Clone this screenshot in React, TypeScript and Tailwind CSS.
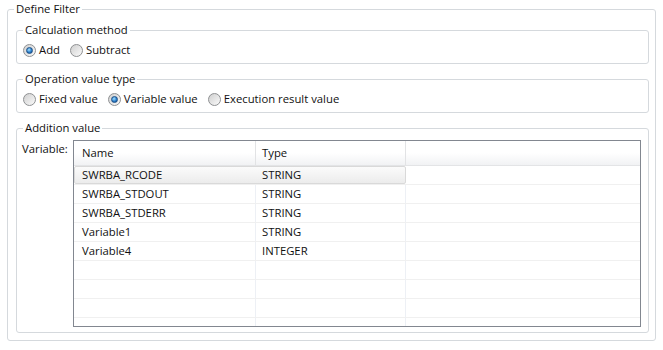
const font = { fontFamily: '"Open Sans", "Noto Sans", sans-serif' };

type Row = { name: string; type: string };

const rows: Row[] = [
  { name: 'SWRBA_RCODE', type: 'STRING' },
  { name: 'SWRBA_STDOUT', type: 'STRING' },
  { name: 'SWRBA_STDERR', type: 'STRING' },
  { name: 'Variable1', type: 'STRING' },
  { name: 'Variable4', type: 'INTEGER' },
  { name: '', type: '' },
  { name: '', type: '' },
  { name: '', type: '' },
  { name: '', type: '' },
];

function Radio({ label, checked }: { label: string; checked?: boolean }) {
  return (
    <label className="flex items-center gap-[3px] h-[16px]">
      <span className="w-[13px] h-[13px] rounded-full border border-[#8e9092] bg-gradient-to-br from-[#d0d0d0] to-[#fafafa] flex items-center justify-center">
        {checked && (
          <span className="w-[7px] h-[7px] rounded-full border border-[#1c4f86] bg-[radial-gradient(circle_at_40%_35%,#a6e2ff,#2b7fcc_55%,#0e4786)]" />
        )}
      </span>
      <span>{label}</span>
    </label>
  );
}

function Group({ title, children, className = '' }: { title: string; children: React.ReactNode; className?: string }) {
  return (
    <fieldset className={`border border-[#d5d9dd] rounded-[3px] ${className}`}>
      <legend className="ml-[6px] px-[2px] leading-[16px]">{title}</legend>
      {children}
    </fieldset>
  );
}

export default function App() {
  return (
    <div className="w-[663px] h-[350px] bg-white text-[11.3px] text-[#111] pt-[1px] pl-[7px]" style={font}>
      <Group title="Define Filter" className="w-[649px]">
        <div className="pt-[5px] pl-[8px] pr-[6px] pb-[7px]">
          <Group title="Calculation method">
            <div className="flex gap-[10px] pl-[6px] pt-[4px] pb-[5px]">
              <Radio label="Add" checked />
              <Radio label="Subtract" />
            </div>
          </Group>

          <Group title="Operation value type" className="mt-[7px]">
            <div className="flex gap-[10px] pl-[6px] pt-[4px] pb-[5px]">
              <Radio label="Fixed value" />
              <Radio label="Variable value" checked />
              <Radio label="Execution result value" />
            </div>
          </Group>

          <Group title="Addition value" className="mt-[7px]">
            <div className="flex pl-[5px] pr-[7px] pt-[4px] pb-[5px]">
              <div className="w-[51px] shrink-0 mt-[1px] leading-[16px]">Variable:</div>
              <div className="flex-1 h-[187px] overflow-hidden border border-[#828790] bg-white">
                <div className="flex h-[25px] bg-gradient-to-b from-white via-white to-[#f1f2f4] border-b border-[#e3e4e6]">
                  <div className="w-[182px] flex items-center pl-[8px] pt-[1px] border-r border-[#e2e3e5]">Name</div>
                  <div className="w-[150px] flex items-center pl-[6px] pt-[1px] border-r border-[#e2e3e5]">Type</div>
                  <div className="flex-1" />
                </div>
                {rows.map((r, i) =>
                  i === 0 ? (
                    <div key={i} className="flex h-[19px] border-b border-[#f0f0f0]">
                      <div className="w-[332px] flex rounded-[2px] border border-[#d9d9d9] bg-gradient-to-b from-[#fbfbfb] to-[#ececec]">
                        <div className="w-[181px] flex items-center pl-[7px]">{r.name}</div>
                        <div className="flex-1 flex items-center pl-[6px]">{r.type}</div>
                      </div>
                      <div className="flex-1" />
                    </div>
                  ) : (
                    <div key={i} className="flex h-[19px] border-b border-[#f0f0f0]">
                      <div className="w-[182px] flex items-center pl-[8px] border-r border-[#edf0f5]">{r.name}</div>
                      <div className="w-[150px] flex items-center pl-[6px] border-r border-[#edf0f5]">{r.type}</div>
                      <div className="flex-1" />
                    </div>
                  )
                )}
              </div>
            </div>
          </Group>
        </div>
      </Group>
    </div>
  );
}
